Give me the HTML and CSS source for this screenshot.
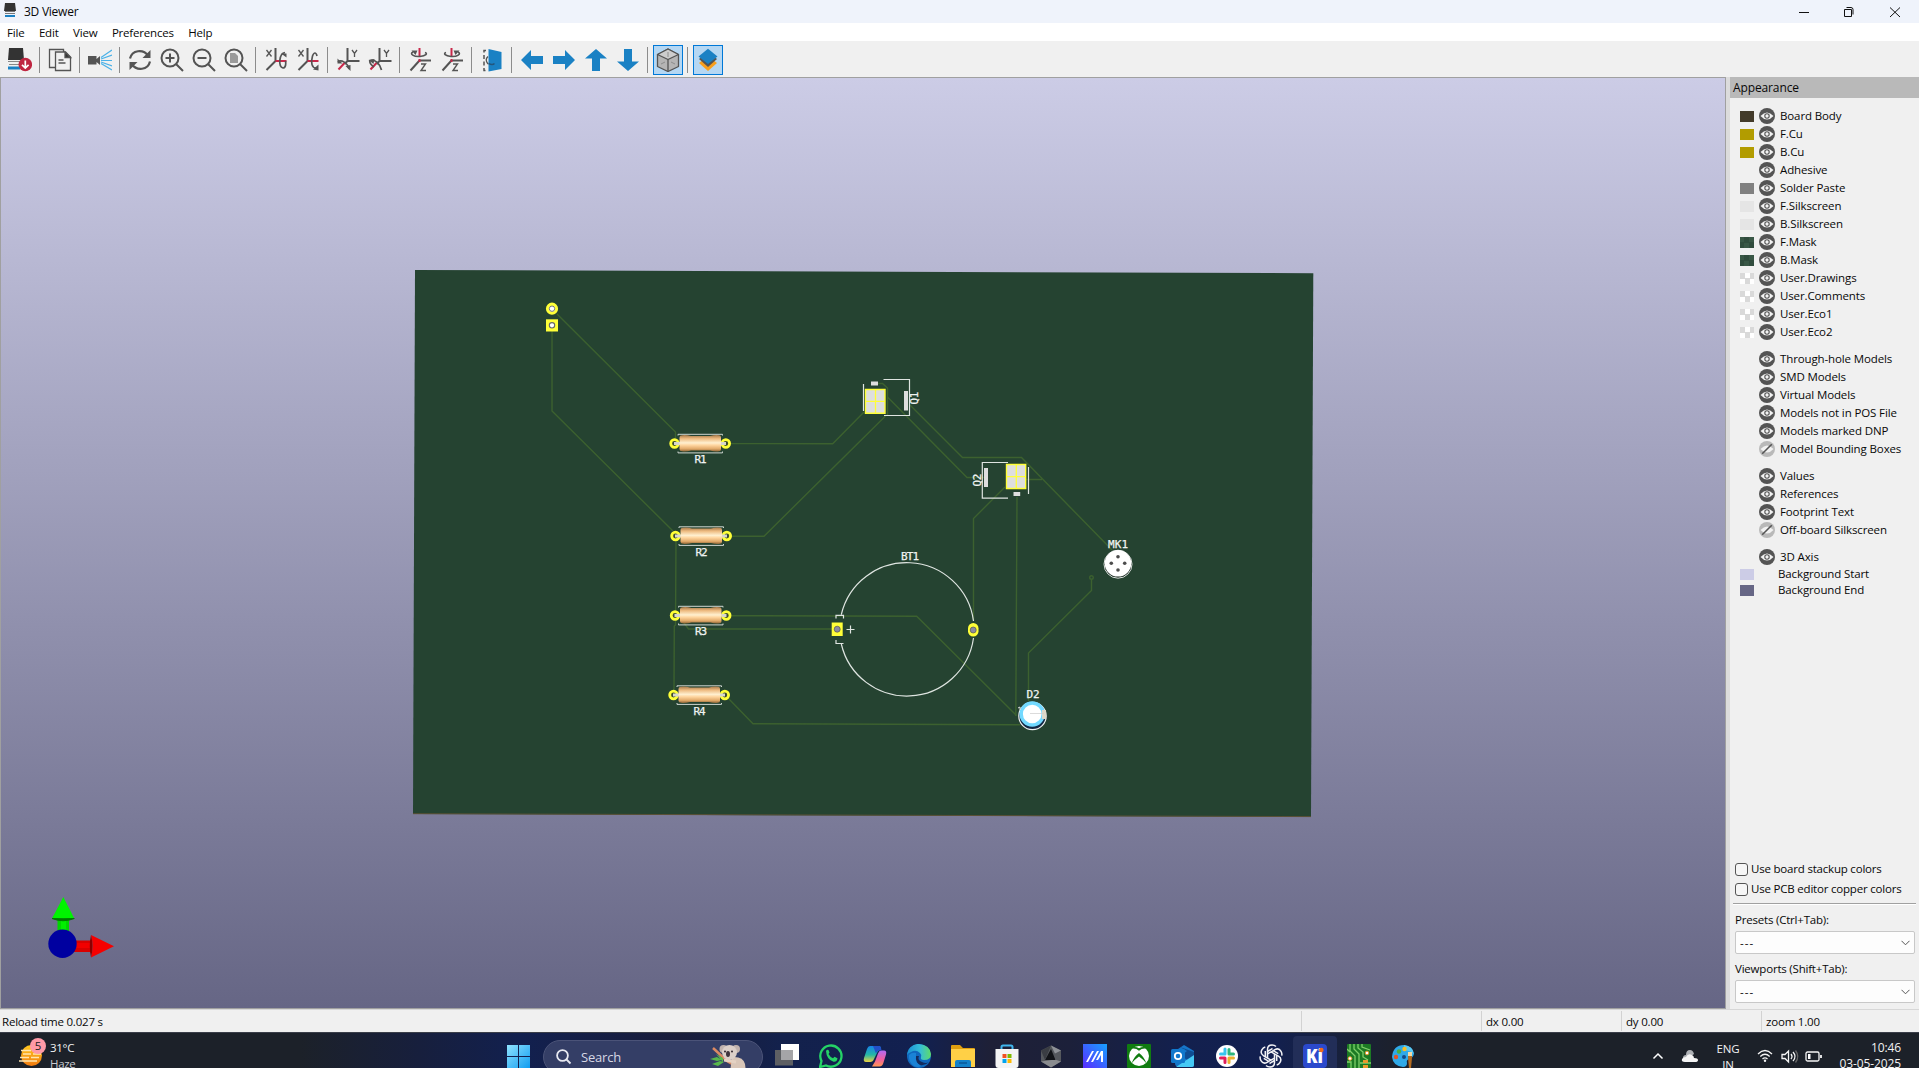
FILE: index.html
```html
<!DOCTYPE html>
<html lang="en">
<head>
<meta charset="utf-8">
<title>3D Viewer</title>
<link rel="stylesheet" href="styles.css">
</head>
<body>
<svg class="defs" width="0" height="0">
  <defs>
    <symbol id="eye" viewBox="0 0 16 16"><circle cx="8" cy="8" r="8" fill="#545454"/><path d="M1.500 8Q8 .8 14.500 8Q8 15.200 1.500 8Z" fill="#f2f2f2"/><circle cx="8" cy="8" r="2.200" fill="#f2f2f2" stroke="#545454" stroke-width="1.100"/></symbol>
    <symbol id="eye-off" viewBox="0 0 16 16"><circle cx="8" cy="8" r="8" fill="#b9b9b9"/><path d="M1.500 8Q8 .8 14.500 8Q8 15.200 1.500 8Z" fill="#f2f2f2"/><path d="M3.200 12.800L12.800 3.200" stroke="#545454" stroke-width="1.600"/></symbol>
    <linearGradient id="resistor" x1="0" y1="0" x2="0" y2="1"><stop offset="0" stop-color="#a67849"/><stop offset=".22" stop-color="#eebb80"/><stop offset=".48" stop-color="#fff0d0"/><stop offset=".62" stop-color="#ffd6a0"/><stop offset=".85" stop-color="#e0a868"/><stop offset="1" stop-color="#8f6638"/></linearGradient>
    <g id="res">
      <path d="M-23 -8v-1.200h44.500v1.200M-23 8v1.400h44.500v-1.400" fill="none" stroke="#cfd6d2"/>
      <circle cx="-26.500" cy="0" r="3.800" fill="#3c4a2e" stroke="#ffff38" stroke-width="2.800"/>
      <circle cx="24.800" cy="0" r="3.800" fill="#3c4a2e" stroke="#ffff38" stroke-width="2.800"/>
      <path d="M-27 0h6M20 0h5" stroke="#d6d6cc" stroke-width="3.200"/>
      <path d="M-19 -8.300q4-.6 9 .7h19q5-1.300 9-.7q2 0 2 2v12q0 2-2 2q-4 .6-9-.7h-19q-5 1.300-9 .7q-2.500 0-2.500-2v-12q0-2 2.500-2Z" fill="url(#resistor)"/>
    </g>
  </defs>
</svg>

<div class="window">
  <header class="titlebar">
    <svg class="app-icon" width="12" height="16"><path d="M1 1h10l1 8H0z" fill="#333"/><path d="M1 9.500h10M1 11.500h10" stroke="#777"/><path d="M1 13h10v2H1z" fill="#1a81c4"/></svg>
    <span class="title">3D Viewer</span>
    <svg class="win-controls" width="108" height="20" fill="none" stroke="#111"><path d="M4 10.500h10M49.500 7.500h7v7h-7zM51.500 5.500h4.500q2 0 2 2v5M95 5.500l10 9.500M105 5.500l-10 9.500"/></svg>
  </header>
  <nav class="menubar"><span>File</span><span>Edit</span><span>View</span><span>Preferences</span><span>Help</span></nav>

  <div class="toolbar">
    <div class="tool"><svg viewBox="0 0 24 24"><path d="M1 0h14l1 12H0z" fill="#333"/><path d="M0 13.500h15M1 16.500h14" stroke="#888"/><path d="M0 18.500h12v3H0z" fill="#1a81c4"/><circle cx="17.300" cy="16.500" r="6.800" fill="#bf2641"/><path d="M17.300 12.500v7M14 16.800l3.300 3.200 3.300-3.200" fill="none" stroke="#fff" stroke-width="1.700"/></svg></div>
    <i class="sep"></i>
    <div class="tool"><svg viewBox="0 0 24 24" fill="#f0f0f0" stroke="#545454" stroke-width="1.300"><path d="M1.500 1.500h14v18h-14z"/><path d="M7.500 4h10l5 5v13.500h-15z"/><path d="M17 4v5.500h5.500z" fill="#333"/><path d="M10.500 12h5M10.500 15h7"/></svg></div>
    <i class="sep"></i>
    <div class="tool"><svg viewBox="0 0 24 24"><path d="M0 8h8.500v3L12 8v9l-3.500-3v2.500H0z" fill="#545454"/><path d="M13 9.500L24 2M13 11l11-4M13 12.500h11M13 14l11 4M13 15.500L24 22" stroke="#4ab1e8" stroke-width="1.200"/></svg></div>
    <i class="sep"></i>
    <div class="tool"><svg viewBox="0 0 24 24" fill="none" stroke="#545454" stroke-width="2.200"><path d="M2 10.500C4 2 15 .5 20.500 8M22 13.500C20 22 9 23.500 3.500 16"/><path d="M22.500 2v8h-8zM1.500 22v-8h8z" fill="#545454" stroke="none"/></svg></div>
    <div class="tool"><svg viewBox="0 0 24 24" fill="none" stroke="#545454" stroke-width="2"><circle cx="10" cy="10" r="8.500"/><path d="M16 16l7 7M5.500 10h9M10 5.500v9"/></svg></div>
    <div class="tool"><svg viewBox="0 0 24 24" fill="none" stroke="#545454" stroke-width="2"><circle cx="10" cy="10" r="8.500"/><path d="M16 16l7 7M5.500 10h9"/></svg></div>
    <div class="tool"><svg viewBox="0 0 24 24" fill="none" stroke="#545454" stroke-width="2"><circle cx="10" cy="10" r="8.500"/><path d="M16 16l7 7"/><path d="M6 5h5l3 3v7H6z" fill="#9a9a9a" stroke="none"/></svg></div>
    <i class="sep"></i>
    <div class="tool"><svg viewBox="-.5 0 24 24" fill="none" stroke="#545454" stroke-width="2"><path d="M11 0v13L2 22"/><path d="M11 13h11" stroke="#c8284a"/><path d="M20.500 4.500c-6 1-7 14-2 15.500c3 0 3-5 2.500-7" stroke-width="1.700"/><path d="M16.500 5.500h5.500v4z" fill="#545454" stroke="none"/><path d="M2 2l5 6.500M7 2L2 8.500" stroke-width="1.300"/></svg></div>
    <div class="tool"><svg viewBox="-.5 0 24 24" fill="none" stroke="#545454" stroke-width="2"><path d="M11 0v13L2 22"/><path d="M11 13h11" stroke="#c8284a"/><path d="M20.500 8c-1-4-3-4-4.500 0c-2 7-.5 12 3.500 12" stroke-width="1.700"/><path d="M16.500 21.500l5.500-5v6z" fill="#545454" stroke="none"/><path d="M2 2l5 6.500M7 2L2 8.500" stroke-width="1.300"/></svg></div>
    <i class="sep"></i>
    <div class="tool"><svg viewBox="-.5 0 24 24" fill="none" stroke="#545454" stroke-width="2"><path d="M11 0v13h12M11 13l-3 3"/><path d="M8 15l-6 6.500" stroke="#c8284a"/><path d="M1.500 14c3-3 10 1 11 7" stroke-width="1.700"/><path d="M9 18l5 5v-6zM1 10.500v5h5z" fill="#545454" stroke="none"/><path d="M15.500 2l2.500 3.500 2.500-3.500M18 5.500V9" stroke-width="1.300"/></svg></div>
    <div class="tool"><svg viewBox="-.5 0 24 24" fill="none" stroke="#545454" stroke-width="2"><path d="M11 0v13h12M11 13l-3 3"/><path d="M8 15l-6 6.500" stroke="#c8284a"/><path d="M2 12.500c4-2 10 4 11 9.500M1.500 12c-1 3 1 5 4 7" stroke-width="1.700"/><path d="M0 12l6-1-1 5z" fill="#545454" stroke="none"/><path d="M15.500 2l2.500 3.500 2.500-3.500M18 5.500V9" stroke-width="1.300"/></svg></div>
    <i class="sep"></i>
    <div class="tool"><svg viewBox="-.5 0 24 24" fill="none" stroke="#545454" stroke-width="2"><path d="M11 12.500h11.500M11 12.500L2 22.500"/><path d="M11 0v9M11 11v3" stroke="#c8284a"/><path d="M4.500 4c-4 2 1 5 7 4.500s8-3 5-4" stroke-width="1.600"/><path d="M3 2.500h6L7 7z" fill="#545454" stroke="none"/><path d="M12.500 16h4.500l-4.500 6.500h5" stroke-width="1.400"/></svg></div>
    <div class="tool"><svg viewBox="-.5 0 24 24" fill="none" stroke="#545454" stroke-width="2"><path d="M11 12.500h11.500M11 12.500L2 22.500"/><path d="M11 0v9M11 11v3" stroke="#c8284a"/><path d="M17.500 4c4 2-1 5-7 4.500s-8-3-5-4" stroke-width="1.600"/><path d="M19 2.500h-6L15 7z" fill="#545454" stroke="none"/><path d="M12.500 16h4.500l-4.500 6.500h5" stroke-width="1.400"/></svg></div>
    <i class="sep"></i>
    <div class="tool"><svg viewBox="0 0 24 24" fill="none" stroke="#545454"><path d="M6 2.500H4v20h3" stroke-width="1.500" stroke-dasharray="4 2.500"/><path d="M8 8.500q-3.500 3 0 7.500" stroke-width="1.300"/><path d="M8.500 1l13 3v17l-13 2.500z" fill="#1a81c4" stroke="none"/><path d="M8.500 15.500q4 2 6 0" stroke="#24567c" stroke-width="1.500"/></svg></div>
    <i class="sep"></i>
    <div class="tool"><svg viewBox="0 0 24 24" fill="#1a81c4"><path d="M1 12l10-10v6h12v8H11v6z"/></svg></div>
    <div class="tool"><svg viewBox="0 0 24 24" fill="#1a81c4"><path d="M23 12l-10-10v6H1v8h12v6z"/></svg></div>
    <div class="tool"><svg viewBox="0 0 24 24" fill="#1a81c4"><path d="M12 1l11 9.500h-7V23H8V10.500H1z"/></svg></div>
    <div class="tool"><svg viewBox="0 0 24 24" fill="#1a81c4"><path d="M12 23l11-9.500h-7V1H8v12.500H1z"/></svg></div>
    <i class="sep"></i>
    <div class="tool active"><svg viewBox="0 0 24 24" stroke="#545454" stroke-width="1.300" stroke-linejoin="round"><path d="M12 1l10.500 5.500v12L12 23.500 1.500 18.500v-12z" fill="#b5b5b5"/><path d="M12 1l10.500 5.500L12 11.500 1.500 6.500z" fill="#cdcdcd"/><path d="M12 11.500v12" fill="none"/><path d="M12 4v5M5 16l4-2M15 14l4 2" stroke="#888" stroke-width=".9"/></svg></div>
    <i class="sep"></i>
    <div class="tool active"><svg viewBox="0 0 24 24"><path d="M3 15l9-7 9 7-9 8z" fill="#f89f1c"/><path d="M3 11l9-7 9 7-9 8z" fill="#545454"/><path d="M2.500 8.500L12 .8l9.500 7.700-9.500 7.500z" fill="#1a81c4"/></svg></div>
  </div>

  <main class="workspace">
    <div class="viewport">
      <svg class="scene" viewBox="1 78 1724 930">
        <path d="M415 270L1313.300 273.200 1311 817 413 814z" fill="#254331"/>
        <path d="M413 813.700L1311 816.600" stroke="#5b5136" stroke-width="1"/>
        <g fill="none" stroke="#3c612f" stroke-width="1.400">
          <path d="M557 314L675.500 432V440M552 331V411L673 531M731 443.600L832.700 443.800 864 412M732 536.200H764L885.500 416M676 541L675.500 625 674.300 626 674 690"/>
          <path d="M684 623L688.500 629H832M732 615.700L916.700 616.300 1016.500 715.500M728 698L753 723.700 1020 724.700"/>
          <path d="M878 383.500H882.500L887.500 388V415M887.500 397L967 477.500H984M910 405L962.500 457.500H1021.500L1112 550M1026 479.500H1042M1005 487L973.500 518.500V621M1017 497L1015.800 716M1091.500 580V590.500L1028.500 653V701"/>
          <circle cx="1091.500" cy="577.500" r="1.800"/>
        </g>
        <circle cx="552" cy="308.700" r="4.500" fill="#fff" stroke="#ffff38" stroke-width="3.200"/>
        <path d="M546 319.300h12v12.200h-12z" fill="#ffff38"/><circle cx="552" cy="325.300" r="2.700" fill="#fff" stroke="#666" stroke-width="1.100"/><circle cx="552" cy="308.700" r="2.700" fill="#fff" stroke="#777" stroke-width="1"/>
        <use href="#res" x="701" y="443.500"/><use href="#res" x="702" y="536"/><use href="#res" x="701.500" y="615.500"/><use href="#res" x="700" y="695"/>
        <g fill="none" stroke="#dfe5e1" stroke-width="1.200">
          <path d="M883.500 379.500H909.500V415.500H884M863.500 384V411M1008 462.500H982.300V498.200H1008M1028.500 467V494"/>
          <path d="M841.300 614.500A67.300 67.300 0 0 1 973.500 621M973.500 638A67.300 67.300 0 0 1 841.300 644M836 618.500V615.300H843.500V618.500M836 640V643.500H843.500"/>
          <path d="M846.500 629.500H854.500M850.500 625.500V633.500"/>
        </g>
        <g fill="#dedede">
          <path d="M871 381.500h7v4h-7zM904 391h4v19.500h-4zM984 468h4v19h-4zM1013.500 492h6.700v4h-6.700z"/>
          <path d="M865.500 389.500h19.500v23.800h-19.500zM1006.500 464.500h19.200v24h-19.200z" stroke="#ffff38" stroke-width="1.400"/>
          <path d="M865.500 401.300h19.500M875.500 389.500v23.800M1006.500 476.700h19.200M1016.300 464.500v24" stroke="#ffff38" stroke-width="1.300"/>
        </g>
        <path d="M831.700 622.500h11v13.500h-11z" fill="#ffff38"/><circle cx="837.200" cy="629.200" r="3" fill="#8b8ba0" stroke="#555" stroke-width=".7"/>
        <rect x="968" y="623" width="10.500" height="13.500" rx="5.200" fill="#ffff38"/><circle cx="973.200" cy="630" r="3" fill="#8b8ba0" stroke="#555" stroke-width=".7"/>
        <circle cx="1118" cy="564.200" r="14" fill="#14241b" stroke="#dce2de" stroke-width="1"/><circle cx="1118" cy="563.300" r="13.300" fill="#fff"/>
        <g fill="#4c4c4c"><circle cx="1118" cy="556.700" r="1.800"/><circle cx="1111.300" cy="563.300" r="1.800"/><circle cx="1124.700" cy="563.300" r="1.800"/><circle cx="1118" cy="570" r="1.800"/></g>
        <circle cx="1032.500" cy="716" r="13.700" fill="#122845" stroke="#f2f2f2" stroke-width="1.200"/><circle cx="1032.200" cy="714" r="11" fill="#fff" stroke="#72d9ff" stroke-width="3.400"/><path d="M1042 710h4v9h-4z" fill="#ddd8c8"/><path d="M1030 713.500h14" stroke="#ccc" stroke-width=".7"/><path d="M1018 708l2-1v3" stroke="#ddd" fill="none"/>
        <g class="silk" text-anchor="middle">
          <text x="700.500" y="463" textLength="12">R1</text><text x="701.500" y="555.500" textLength="12">R2</text><text x="701" y="635" textLength="12">R3</text><text x="699.500" y="714.500" textLength="12">R4</text>
          <text x="910" y="560" textLength="18">BT1</text><text x="1118" y="548" textLength="20">MK1</text><text x="1033" y="698.300" textLength="13">D2</text>
          <text transform="translate(918 398) rotate(-90)" textLength="13">Q1</text><text transform="translate(981 480) rotate(-90)" textLength="13">Q2</text>
        </g>
        <path d="M57.500 916h11.500v16H57.500z" fill="#00d600"/><path d="M61 916h5v16h-5z" fill="#00f000"/><path d="M63.300 897L74.300 918.500Q63 923 52 918.500z" fill="#00f400"/><path d="M52 918.500Q63 923 74.300 918.500Q63 919 52 918.500" fill="#007800" stroke="#007800"/>
        <path d="M74 940.500h18v11.500H74z" fill="#d90000"/><path d="M74 943h17v5H74z" fill="#f20000"/><path d="M91 935L114 946.300 91 957.500Q94 946 91 935z" fill="#f60000"/><path d="M91 935Q88.500 946 91 957.500Q94 946 91 935" fill="#8c0000"/>
        <circle cx="62.500" cy="943.800" r="14.200" fill="#0000a0"/>
      </svg>
    </div>

    <aside class="panel">
      <h2>Appearance</h2>
      <div class="layers">
        <div class="row"><i class="swatch body"></i><svg><use href="#eye"/></svg><span>Board Body</span></div>
        <div class="row"><i class="swatch copper"></i><svg><use href="#eye"/></svg><span>F.Cu</span></div>
        <div class="row"><i class="swatch copper"></i><svg><use href="#eye"/></svg><span>B.Cu</span></div>
        <div class="row"><i class="swatch"></i><svg><use href="#eye"/></svg><span>Adhesive</span></div>
        <div class="row"><i class="swatch paste"></i><svg><use href="#eye"/></svg><span>Solder Paste</span></div>
        <div class="row"><i class="swatch silkscreen"></i><svg><use href="#eye"/></svg><span>F.Silkscreen</span></div>
        <div class="row"><i class="swatch silkscreen"></i><svg><use href="#eye"/></svg><span>B.Silkscreen</span></div>
        <div class="row"><i class="swatch mask"></i><svg><use href="#eye"/></svg><span>F.Mask</span></div>
        <div class="row"><i class="swatch mask"></i><svg><use href="#eye"/></svg><span>B.Mask</span></div>
        <div class="row"><i class="swatch clear"></i><svg><use href="#eye"/></svg><span>User.Drawings</span></div>
        <div class="row"><i class="swatch clear"></i><svg><use href="#eye"/></svg><span>User.Comments</span></div>
        <div class="row"><i class="swatch clear"></i><svg><use href="#eye"/></svg><span>User.Eco1</span></div>
        <div class="row"><i class="swatch clear"></i><svg><use href="#eye"/></svg><span>User.Eco2</span></div>
        <div class="row group"><i class="swatch"></i><svg><use href="#eye"/></svg><span>Through-hole Models</span></div>
        <div class="row"><i class="swatch"></i><svg><use href="#eye"/></svg><span>SMD Models</span></div>
        <div class="row"><i class="swatch"></i><svg><use href="#eye"/></svg><span>Virtual Models</span></div>
        <div class="row"><i class="swatch"></i><svg><use href="#eye"/></svg><span>Models not in POS File</span></div>
        <div class="row"><i class="swatch"></i><svg><use href="#eye"/></svg><span>Models marked DNP</span></div>
        <div class="row"><i class="swatch"></i><svg><use href="#eye-off"/></svg><span>Model Bounding Boxes</span></div>
        <div class="row group"><i class="swatch"></i><svg><use href="#eye"/></svg><span>Values</span></div>
        <div class="row"><i class="swatch"></i><svg><use href="#eye"/></svg><span>References</span></div>
        <div class="row"><i class="swatch"></i><svg><use href="#eye"/></svg><span>Footprint Text</span></div>
        <div class="row"><i class="swatch"></i><svg><use href="#eye-off"/></svg><span>Off-board Silkscreen</span></div>
        <div class="row group"><i class="swatch"></i><svg><use href="#eye"/></svg><span>3D Axis</span></div>
        <div class="row bg"><i class="swatch start"></i><span>Background Start</span></div>
        <div class="row bg"><i class="swatch end"></i><span>Background End</span></div>
      </div>
      <div class="options">
        <div class="check"><i></i><span>Use board stackup colors</span></div>
        <div class="check"><i></i><span>Use PCB editor copper colors</span></div>
        <hr>
        <div class="label">Presets (Ctrl+Tab):</div>
        <div class="select"><span>---</span><svg width="9" height="6"><path d="M.5 .8l4 4 4-4" fill="none" stroke="#555"/></svg></div>
        <div class="label">Viewports (Shift+Tab):</div>
        <div class="select"><span>---</span><svg width="9" height="6"><path d="M.5 .8l4 4 4-4" fill="none" stroke="#555"/></svg></div>
      </div>
    </aside>
  </main>

  <footer class="statusbar"><span>Reload time 0.027 s</span><span></span><span>dx 0.00</span><span>dy 0.00</span><span>zoom 1.00</span></footer>

  <div class="taskbar">
    <div class="weather">
      <svg width="30" height="30"><defs><linearGradient id="sun" x1="0" y1="0" x2="0" y2="1"><stop offset="0" stop-color="#ffc91f"/><stop offset="1" stop-color="#f17a0f"/></linearGradient></defs><circle cx="12.500" cy="17.500" r="10.500" fill="url(#sun)"/><path d="M2 12.500h10M16 12.500h6M4 16h8M14 16h8M1 19.500h9M12 19.500h8M0 23h18" stroke="#ffe5ae" stroke-width="1.500"/><circle cx="19" cy="8" r="8" fill="#ff9aa7"/><text x="19" y="12.200" text-anchor="middle" font-size="11.500" fill="#222">5</text></svg>
      <div><b>31°C</b><span>Haze</span></div>
    </div>
    <div class="launchers">
      <svg class="start" viewBox="0 0 24 24"><defs><linearGradient id="win" x1="0" y1="0" x2="1" y2="1"><stop offset="0" stop-color="#8fe3ff"/><stop offset="1" stop-color="#0f9cf0"/></linearGradient></defs><path d="M0 0h11v11H0zM12 0h11v11H12zM0 12h11v11H0zM12 12h11v11H12z" fill="url(#win)"/></svg>
      <div class="search">
        <svg width="16" height="16" fill="none" stroke="#e8eaf2" stroke-width="1.800"><circle cx="6.500" cy="6.500" r="5.400"/><path d="M10.500 10.500L14.500 14.500"/></svg>
        <span>Search</span>
        <svg width="38" height="28" viewBox="0 0 38 28"><path d="M3 4l14 13 12 7" stroke="#db8a62" stroke-width="2.500" fill="none"/><path d="M0 15l7-2 5 3-5 1zM2 20l8-3 4 1-6 4zM6 10l7 4v4z" fill="#58b84c"/><path d="M22 13q11-1 13 7l1 8H20z" fill="#d9c6b8"/><circle cx="13.500" cy="5" r="4" fill="#c2b3ae"/><circle cx="26" cy="5" r="4" fill="#c2b3ae"/><circle cx="19.500" cy="8.500" r="7.500" fill="#dccfc8"/><ellipse cx="18" cy="10" rx="2" ry="3" fill="#40353d"/><circle cx="15" cy="7.500" r="1" fill="#30252d"/><circle cx="22" cy="7.500" r="1" fill="#30252d"/><path d="M14 16l12 2" stroke="#e5d2c3" stroke-width="3"/></svg>
      </div>
      <div class="app"><svg viewBox="0 0 24 24"><path d="M6 0h18v16H6z" fill="#fff"/><path d="M0 6h18v15.500H0z" fill="#666" fill-opacity=".9"/><path d="M6 6h12v10H6z" fill="#a5a5a8"/></svg></div>
      <div class="app"><svg viewBox="0 0 24 24"><path d="M1 23l1.500-6A10.600 10.600 0 1 1 7 21.500z" fill="none" stroke="#25d366" stroke-width="2.300"/><path d="M7 7q1-2 2.500-1l1 2.500-1 1.500q1.500 3 4.500 4.200l1.500-1.500 3 1.500q-.5 4-4 3.500Q7.500 15.500 7 7z" fill="#25d366"/></svg></div>
      <div class="app"><svg viewBox="0 0 24 24"><defs><linearGradient id="cp1" x1="0" y1="0" x2="0" y2="1"><stop offset="0" stop-color="#1782e8"/><stop offset=".55" stop-color="#24b7a5"/><stop offset="1" stop-color="#efd340"/></linearGradient><linearGradient id="cp2" x1="0" y1="0" x2="0" y2="1"><stop offset="0" stop-color="#b16af5"/><stop offset=".55" stop-color="#f05fa0"/><stop offset="1" stop-color="#ff9652"/></linearGradient></defs><path d="M7 2h9q2 0 2 3l-3 2-4 8q-1 3-4 3H3q-3 0-2-4l3-9q1-3 3-3z" fill="url(#cp1)"/><path d="M18 6.500h3q3 0 2 4l-2.500 8q-1 4-4 4H9l3-5 3-8q1-3 3-3z" fill="url(#cp2)"/><path d="M10 2h6q2 0 2.500 4.500h-2.500q-2 0-3 3z" fill="#2250c8"/></svg></div>
      <div class="app"><svg viewBox="0 0 24 24"><defs><linearGradient id="ed"><stop offset="0" stop-color="#198fd4"/><stop offset=".55" stop-color="#36bdd5"/><stop offset="1" stop-color="#5fdb68"/></linearGradient></defs><circle cx="12" cy="12" r="12" fill="#1068bd"/><path d="M0 11C1 2 8 0 12 0q11 1 12 10q0 6-7 6-4 0-3-3 1-2-1-4-4-4-9-1-3 1-4 3z" fill="url(#ed)"/><path d="M9 12q-2 6 4 9 5 1 9-3-3 2-7 0-5-2-3-6z" fill="#132b5e"/><path d="M9 12q-1 7 5 10-3 2-7 0-6-4-5-11 3-3 7-2z" fill="#1a83d6"/></svg></div>
      <div class="app"><svg viewBox="0 0 24 24"><path d="M0 2q0-1 1-1h8l3 3h11q1 0 1 1v18H0z" fill="#e0a010"/><path d="M0 5h24v18H0z" fill="#ffd046"/><path d="M4 23v-5q0-2 2-2h12q2 0 2 2v5z" fill="#1481c9"/><path d="M8 19h8" stroke="#0b5a98" stroke-width="1.500"/></svg></div>
      <div class="app"><svg viewBox="0 0 24 24"><path d="M6.500 7V3q0-1.500 1.500-1.500h8q1.500 0 1.500 1.500v4" fill="none" stroke="#41b7ef" stroke-width="2"/><path d="M.5 5h23v16q0 3-3 3h-17q-3 0-3-3z" fill="#f4f4f4"/><path d="M7.500 10h4v4h-4z" fill="#f25022"/><path d="M12.500 10h4v4h-4z" fill="#7fba00"/><path d="M7.500 15h4v4h-4z" fill="#00a4ef"/><path d="M12.500 15h4v4h-4z" fill="#ffb900"/></svg></div>
      <div class="app"><svg viewBox="0 0 24 24"><path d="M12 1.500l10 5v11l-10 6-10-6v-11z" fill="#55585d"/><path d="M12 1.500l10 5-6 3-4-8z" fill="#8f9297"/><path d="M2 17.500l10 6 10-6-6-2z" fill="#8a8c90"/><path d="M12 5l4.500 11H6z" fill="#111317"/><path d="M2 6.500l10-5L6 16z" fill="#3a3d43"/></svg></div>
      <div class="app"><svg viewBox="0 0 24 24"><defs><linearGradient id="my" x1="0" y1="1" x2="1" y2="0"><stop offset="0" stop-color="#5a2bff"/><stop offset="1" stop-color="#16a1ff"/></linearGradient></defs><path d="M0 0h24v24H0z" fill="url(#my)"/><path d="M3 18L9 7h2L5 18zM8 18l6-11h2l-6 11zM13 16l5-9h2v11h-2v-7l-3 5z" fill="#fff"/></svg></div>
      <div class="app"><svg viewBox="0 0 24 24"><rect width="24" height="24" rx="1" fill="#107c10"/><circle cx="12" cy="12" r="10" fill="#fff"/><path d="M5.500 4.500Q9 4 12 6.800 15 4 18.500 4.500 19.500 4 18 3.200 15 2.500 12 4.200 9 2.500 6 3.200 4.500 4 5.500 4.500zM4.500 19.500Q7 12.500 12 9q5 3.500 7.500 10.500Q17 16 12 12.500 7 16 4.500 19.500z" fill="#107c10"/></svg></div>
      <div class="app"><svg viewBox="0 0 24 24"><path d="M4 7l9-6 10 6v14q0 2-2 2H8q-4 0-4-4z" fill="#1675c8"/><path d="M9 3l7 4-6 5 13 8V8z" fill="#0f4d93"/><path d="M5 23l18-12v10q0 2-2 2z" fill="#45c9f5"/><rect x="0" y="5" width="14" height="14" rx="1.500" fill="#1178cc"/><circle cx="7" cy="12" r="3.200" fill="none" stroke="#fff" stroke-width="1.800"/></svg></div>
      <div class="app"><svg viewBox="0 0 24 24"><circle cx="12" cy="12" r="11" fill="#fff"/><g stroke-width="3" stroke-linecap="round"><path d="M10 5v5M5.500 10H10" stroke="#36c5f0"/><path d="M14 5.500V10M14 10h4.500" stroke="#2eb67d"/><path d="M14 14v4.500M14 14h4.500" stroke="#ecb22e"/><path d="M10 14v4.500M5.500 14H10" stroke="#e01e5a"/></g></svg></div>
      <div class="app"><svg viewBox="0 0 24 24" fill="none" stroke="#f2f2f5" stroke-width="1.500"><g id="petal"><path d="M8.500 14V5.500q0-4.500 4.500-4.500 2.500 0 4 1.500M8.500 7.500l5-3"/></g><use href="#petal" transform="rotate(60 12 12)"/><use href="#petal" transform="rotate(120 12 12)"/><use href="#petal" transform="rotate(180 12 12)"/><use href="#petal" transform="rotate(240 12 12)"/><use href="#petal" transform="rotate(300 12 12)"/></svg></div>
      <div class="app current"><svg viewBox="0 0 24 24"><rect width="24" height="24" rx="4" fill="#2b49cc"/><text x="11.500" y="19" text-anchor="middle" font-size="19" font-weight="800" fill="#fff" textLength="17" lengthAdjust="spacingAndGlyphs">Ki</text><circle cx="18.300" cy="6" r="2.300" fill="#f26a1b"/></svg></div>
      <div class="app"><svg viewBox="0 0 24 24"><rect width="24" height="24" rx="1" fill="#1c7a24"/><path d="M3 0v7l5 5v12M7 0v5l5 5v14M11 0v4l5 4v5l5 3M0 18h4v6M15 0v3l8 3M0 5l3 3M13 19h11" stroke="#7fcf6a" stroke-width="1.300" fill="none"/><path d="M16 16h5v3h-5zM16 21h5v3h-5z" fill="#e89a2c"/><circle cx="20" cy="9" r="1.800" fill="#fff" stroke="#e89a2c"/><circle cx="3" cy="14.500" r="1.800" fill="#fff" stroke="#e89a2c"/></svg></div>
      <div class="app"><svg viewBox="0 0 24 24"><path d="M13 1q9 1 10 9-1 4-5 5-3 1-2 4 0 4-4 4Q2 22 1 13 2 1 13 1z" fill="#2fa9e8"/><path d="M13 1q9 1 10 9-5-5-10-3z" fill="#5ac9f5"/><circle cx="5" cy="13" r="2.200" fill="#e25525"/><circle cx="8" cy="7.500" r="2.200" fill="#4caf3d"/><circle cx="13.500" cy="5" r="2.200" fill="#f8bf25"/><circle cx="13" cy="13" r="2" fill="#134987"/><path d="M17 8h4v6l-1 10h-2l-1-10z" fill="#b46b20"/><path d="M17 8h4v4h-4z" fill="#f1d9a6"/></svg></div>
    </div>
    <div class="tray">
      <svg class="chevron" width="12" height="8"><path d="M1.500 6.500L6 2l4.500 4.500" fill="none" stroke="#fff" stroke-width="1.500"/></svg>
      <svg class="cloud" width="18" height="14"><path d="M2 9q0-3 3-3 0-5 4-5 3 0 4 4l-8 6z" fill="#aeb1b5"/><path d="M4 13q-4 0-3-3 1-2 4-2 2-4 6-2 2 1 2 3 4 0 4 2t-3 2z" fill="#f5f5f5"/></svg>
      <div class="lang">ENG<br>IN</div>
      <svg class="status-icons" width="66" height="16" fill="none" stroke="#f5f5f5" stroke-width="1.300"><path d="M1 6q7-7 14 0M3.300 8.500q4.700-4.500 9.400 0M5.500 11q2.500-2.300 5 0"/><circle cx="8" cy="12.800" r="1.200" fill="#f5f5f5" stroke="none"/><path d="M25 6.500h3l3.500-3.500v11L28 10.500h-3zM34 6q2 2.500 0 5M36 4q4 4.500 0 9"/><path d="M38.500 2.500q4.500 6 0 12" stroke="#666"/><rect x="49" y="4" width="13" height="9" rx="1.500"/><path d="M51 6h2.500v5H51z" fill="#fff" stroke="none"/><path d="M64 7v3" stroke-width="1.800"/></svg>
      <div class="clock">10:46<br>03-05-2025</div>
    </div>
  </div>
</div>
</body>
</html>
```
FILE: styles.css
```css
* { box-sizing: border-box; }
body {
  margin: 0;
  overflow: hidden;
  font-family: "Open Sans", "Noto Sans", sans-serif;
  font-size: 11.5px;
  color: #080808;
}
svg { display: block; flex: none; }
.defs { position: absolute; }
.window { width: 1919px; height: 1068px; display: flex; flex-direction: column; background: #f0f0f0; overflow: hidden; }

.titlebar { height: 23px; flex: none; display: flex; align-items: center; padding: 0 16px 0 4px; background: #eff3fb; }
.app-icon { margin-top: -3px; }
.title { margin-left: 8px; font-size: 12px; letter-spacing: -0.25px; }
.win-controls { margin-left: auto; }

.menubar { height: 18px; flex: none; display: flex; align-items: center; gap: 14.5px; padding-left: 7px; background: #fff; line-height: 18px; letter-spacing: -0.2px; }
.menubar span { padding-top: 2px; }

.toolbar { height: 36px; flex: none; display: flex; align-items: center; padding: 2px 0 0 4px; }
.tool { width: 30px; height: 30px; margin: 0 1px; display: flex; align-items: center; justify-content: center; }
.tool svg { width: 24px; height: 24px; }
.tool.active { background: #b5d7f3; border: 1px solid #0078d7; }
.sep { width: 1px; height: 26px; margin: 0 4px 0 3px; background: #8c8c8c; }

.workspace { height: 932px; flex: none; display: flex; }
.viewport { width: 1726px; border: 1px solid #a0a0a0; background: linear-gradient(#cccce6, #666685); }
.scene { width: 1724px; height: 930px; }
.silk text { font: 11px "DejaVu Sans Mono", monospace; fill: #f0f3f1; stroke: #f0f3f1; stroke-width: 0.25px; }

.panel { flex: 1; border-left: 4px solid #dcdcdc; display: flex; flex-direction: column; letter-spacing: -0.12px; }
.panel h2 { margin: 0; height: 21px; padding-left: 3px; background: #b9b9b9; font-size: 12px; font-weight: 400; line-height: 21px; }
.layers { padding: 9px 0 0 10px; }
.row { height: 18px; display: flex; align-items: center; white-space: nowrap; }
.row span { margin-top: -1px; }
.row svg { width: 16px; height: 16px; margin: 0 5px; }
.row.group { margin-top: 9px; }
.row.bg { height: 16px; }
.row.bg span { margin-left: 24px; }
.swatch { width: 14px; height: 11px; flex: none; }
.body { background: #433b2a; }
.copper { background: #b29c00; }
.paste { background: #808080; }
.silkscreen { background: #e5e5e5; }
.mask { background: conic-gradient(#395746 25%, #304c3d 0 50%, #395746 0 75%, #304c3d 0) 4px 0 / 10px 11px; }
.clear { background: conic-gradient(#fff 25%, #d9d9d9 0 50%, #fff 0 75%, #d9d9d9 0) 0 0 / 10px 11px; }
.start { background: #cccce6; }
.end { background: #666685; }

.options { margin-top: auto; padding: 0 4px 6px 5px; letter-spacing: -0.2px; }
.check { height: 20px; display: flex; align-items: center; gap: 3px; }
.check span { margin-top: -2px; }
.check i { width: 13px; height: 13px; border: 1px solid #555; border-radius: 3px; background: #f6f6f6; }
.options hr { margin: 4px -1px 7px -2px; height: 2px; border: 0; border-top: 1px solid #a0a0a0; border-bottom: 1px solid #fff; }
.label { height: 19px; line-height: 15px; }
.select { height: 23px; display: flex; align-items: center; justify-content: space-between; padding: 0 4px; border: 1px solid #c8c8c8; border-radius: 2px; background: #fdfdfd; }
.select span { letter-spacing: 1.1px; }
.select + .label { margin-top: 7px; }

.statusbar { height: 23px; flex: none; display: grid; grid-template-columns: 1301px 180px 140px 140px 1fr; align-items: center; border-top: 1px solid #d7d7d7; letter-spacing: -0.2px; }
.statusbar span { height: 20px; line-height: 22px; padding-left: 4px; border-left: 1px solid #d2d2d2; }
.statusbar span:first-child { border: 0; padding-left: 2px; }

.taskbar {
  height: 36px; flex: none; display: flex; align-items: flex-start; border-top: 1px solid #3a3e49; color: #f2f2f2; overflow: hidden;
  background: linear-gradient(90deg, #1c2129 0, #1c2129 300px, #171f3d 420px, #12204f 520px, #191d3a 680px, #13214c 780px, #122050 920px, #1e2037 990px, #1c203a 1070px, #13204e 1180px, #122050 1270px, #1c212d 1390px, #1c2129 1480px);
}
.weather { width: 507px; display: flex; padding: 5px 0 0 19px; gap: 1px; }
.weather div { display: flex; flex-direction: column; line-height: 16px; padding-top: 2px; letter-spacing: -0.3px; }
.weather b { font-weight: 400; }
.weather span { color: #c8cad0; }
.launchers { display: flex; }
.launchers .start { width: 24px; height: 24px; margin: 12px 12px 0 0; background: none; }
.search { width: 220px; height: 34px; margin: 7px 2px 0 0; display: flex; align-items: flex-start; padding: 8px 14px 0 12px; border-radius: 17px; border: 1px solid #4b5378; background: #343e66; }
.search span { margin: -2px auto 0 9px; font-size: 13px; line-height: 20px; letter-spacing: -0.2px; color: #d6d8e4; }
.search svg:last-child { margin-top: -5px; }
.app { width: 44px; height: 36px; padding: 11px 10px 0; }
.app svg { width: 24px; height: 24px; }
.app.current { margin-top: 3px; padding-top: 8px; border-radius: 4px; background: #222e58; }
.tray { flex: 1; display: flex; align-items: flex-start; justify-content: flex-end; padding-right: 18px; line-height: 16px; letter-spacing: -0.1px; }
.chevron { margin: 19px 17px 0 0; }
.cloud { margin: 16px 16px 0 0; }
.lang { width: 26px; text-align: center; padding-top: 8px; }
.status-icons { margin: 15px 10px 0 16px; }
.clock { width: 68px; text-align: right; padding-top: 7px; font-size: 12px; }
```
